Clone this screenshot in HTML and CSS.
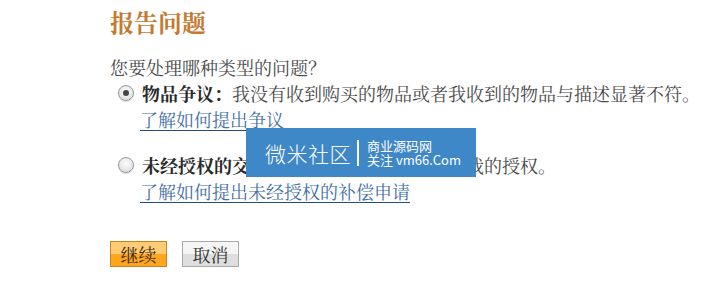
FILE: index.html
```html
<!DOCTYPE html>
<html lang="zh-CN">
<head>
<meta charset="utf-8">
<title>报告问题</title>
<link rel="stylesheet" href="styles.css">
</head>
<body>
<div class="page">
  <h1 class="title">报告问题</h1>
  <p class="question">您要处理哪种类型的问题？</p>
  <div class="option">
    <div class="option-row"><span class="radio checked"></span><span class="label"><b>物品争议：</b>我没有收到购买的物品或者我收到的物品与描述显著不符。</span></div>
    <a class="help" href="#">了解如何提出争议</a>
  </div>
  <div class="option second">
    <div class="option-row"><span class="radio"></span><span class="label"><b>未经授权的交易：</b>这笔交易根本没有经过我的授权。</span></div>
    <a class="help" href="#">了解如何提出未经授权的补偿申请</a>
  </div>
  <div class="actions">
    <button class="btn primary">继续</button>
    <button class="btn">取消</button>
  </div>
</div>
<div class="watermark">
  <span class="wm-name">微米社区</span>
  <span class="wm-bar"></span>
  <span class="wm-sub"><span>商业源码网</span><span>关注 vm66.Com</span></span>
</div>
</body>
</html>
```
FILE: styles.css
```css
html, body {
  margin: 0;
  padding: 0;
  background: #fff;
}
body {
  width: 723px;
  height: 306px;
  overflow: hidden;
  position: relative;
  font-family: "Noto Serif CJK SC", "Liberation Serif", "Noto Sans CJK SC", serif;
  color: #4a4a4a;
  font-size: 18px;
}
.page {
  padding: 8px 0 0 110px;
  display: flex;
  flex-direction: column;
  align-items: flex-start;
}
.title {
  margin: 0;
  font-size: 24px;
  line-height: 28px;
  font-weight: bold;
  color: #c47a30;
}
.question {
  margin: 18px 0 0 0;
  line-height: 26px;
  color: #4a4a4a;
}
.option {
  display: flex;
  flex-direction: column;
  align-items: flex-start;
}
.option.second {
  margin-top: 20px;
}
.option-row {
  display: flex;
  align-items: center;
  padding-left: 8px;
  gap: 8px;
  line-height: 26px;
  white-space: nowrap;
}
.label b {
  color: #2a2a2a;
}
.radio {
  width: 14px;
  height: 14px;
  border-radius: 50%;
  border: 1px solid #9a9a9a;
  background: radial-gradient(circle at 50% 40%, #fdfdfd 0%, #e6e6e6 60%, #cfcfcf 100%);
  box-shadow: 0 1px 1px rgba(0,0,0,0.15);
  position: relative;
  flex: none;
}
.radio.checked::after {
  content: "";
  position: absolute;
  left: 4px;
  top: 4px;
  width: 6px;
  height: 6px;
  border-radius: 50%;
  background: #444;
}
.help {
  margin-left: 30px;
  line-height: 26px;
  color: #4470a6;
  text-decoration: underline;
  text-decoration-color: #1f4f8a;
  text-underline-offset: 3px;
}
.actions {
  display: flex;
  gap: 15px;
  margin-top: 37px;
}
.btn {
  width: 57px;
  height: 26px;
  padding: 0;
  font-family: inherit;
  font-size: 18px;
  line-height: 24px;
  color: #333;
  border: 1px solid #a9a9a9;
  background: linear-gradient(#f5f5f5 0%, #f5f5f5 50%, #dedede 50%, #dedede 100%);
  border-radius: 0;
}
.btn.primary {
  border-color: #c5861d;
  background: linear-gradient(#ffcb74 0%, #ffcb74 50%, #ffa51e 50%, #ffa51e 100%);
  color: #3a2a10;
}
.watermark {
  position: absolute;
  left: 246px;
  top: 128px;
  width: 230px;
  height: 49px;
  background: #3f88c8;
  color: #fff;
  display: flex;
  align-items: center;
  padding-left: 19px;
  box-sizing: border-box;
  font-family: "Noto Sans CJK SC", "Open Sans", sans-serif;
}
.wm-name {
  font-size: 21px;
  line-height: 24px;
  font-weight: 300;
  letter-spacing: 0.5px;
}
.wm-bar {
  width: 2px;
  height: 26px;
  background: #fff;
  margin: 0 8px 0 6px;
}
.wm-sub {
  display: flex;
  flex-direction: column;
  font-size: 13px;
  line-height: 14px;
}
```
